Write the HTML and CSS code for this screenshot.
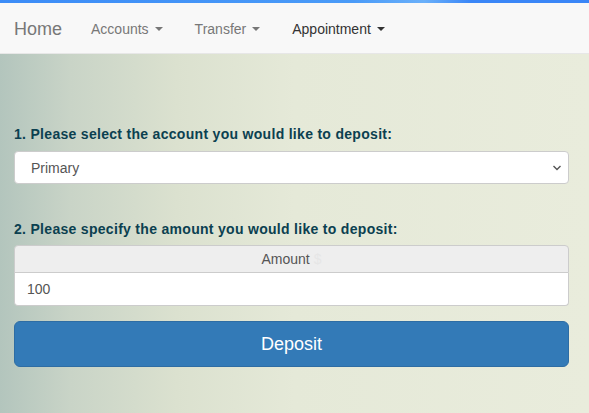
FILE: index.html
```html
<!DOCTYPE html>
<html>
<head>
<meta charset="utf-8">
<link rel="stylesheet" href="styles.css">
</head>
<body>
<div class="topbar"></div>
<nav class="navbar">
  <a class="brand">Home</a>
  <a class="nav-item">Accounts <span class="caret"></span></a>
  <a class="nav-item">Transfer <span class="caret"></span></a>
  <a class="nav-item active">Appointment <span class="caret"></span></a>
</nav>
<main class="content">
  <label class="q q1">1. Please select the account you would like to deposit:</label>
  <div class="select">
    <span>Primary</span>
    <svg class="chev" width="10" height="6" viewBox="0 0 10 6"><path d="M1.5 1 L5 4.5 L8.5 1" fill="none" stroke="#555" stroke-width="1.4"/></svg>
  </div>
  <label class="q q2">2. Please specify the amount you would like to deposit:</label>
  <div class="addon">Amount <span class="ghost">$</span></div>
  <div class="input">100</div>
  <button class="btn">Deposit</button>
</main>
</body>
</html>
```
FILE: styles.css
```css
html, body { margin: 0; padding: 0; }
body {
  font-family: "Liberation Sans", Arial, sans-serif;
  font-size: 14px;
  color: #333;
  height: 413px;
  overflow: hidden;
  background: linear-gradient(to right, #b3c5bd 0%, #c9d4c7 12%, #dbe1cf 30%, #e5e9d8 50%, #e9ecdc 100%);
}
.topbar {
  height: 3px;
  background: linear-gradient(to right, #3c8cf7 0%, #4a9bf8 60%, #6ab0fa 72%, #3a86f7 80%, #3a86f7 100%);
}
.navbar {
  height: 48px;
  padding-top: 2px;
  background: #f8f8f8;
  border-bottom: 1px solid #e7e7e7;
  display: flex;
  align-items: center;
  padding-left: 14px;
}
.brand { font-size: 18px; color: #777; margin-right: 29px; }
.nav-item { color: #777; font-size: 14px; margin-right: 32px; display: flex; align-items: center; }
.nav-item.active { color: #333; }
.caret {
  display: inline-block;
  width: 0; height: 0;
  margin-left: 6px;
  border-top: 4px solid currentColor;
  border-left: 4px solid transparent;
  border-right: 4px solid transparent;
}
.content { padding: 0 20px 0 14px; display: flex; flex-direction: column; }
.q { font-weight: bold; font-size: 14px; line-height: 16px; letter-spacing: 0.3px; color: #0b4050; }
.q1 { margin-top: 72px; }
.q2 { margin-top: 37px; }
.select {
  margin-top: 9px;
  height: 31px;
  background: #fff;
  border: 1px solid #ccc;
  border-radius: 4px;
  display: flex;
  align-items: center;
  justify-content: space-between;
  padding: 0 6px 0 16px;
  color: #555;
  font-size: 14px;
}
.addon {
  margin-top: 8px;
  height: 26px;
  background: #eee;
  border: 1px solid #ccc;
  border-radius: 4px 4px 0 0;
  display: flex;
  align-items: center;
  justify-content: center;
  color: #555;
  font-size: 14px;
}
.ghost { color: #e6e6e6; margin-left: 4px; }
.input {
  height: 32px;
  background: #fff;
  border: 1px solid #ccc;
  border-top: none;
  border-radius: 0 0 4px 4px;
  display: flex;
  align-items: center;
  padding-left: 12px;
  color: #555;
  font-size: 14px;
}
.btn {
  margin-top: 15px;
  height: 46px;
  background: #337ab7;
  border: 1px solid #2e6da4;
  border-radius: 6px;
  color: #fff;
  font-family: "Liberation Sans", Arial, sans-serif;
  font-size: 18px;
}
```
